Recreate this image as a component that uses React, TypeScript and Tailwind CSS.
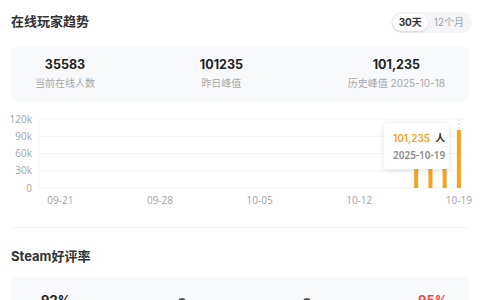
import React from "react";

const days = Array.from({ length: 30 }, (_, i) => {
  const d = new Date(2025, 8, 20 + i);
  const mm = String(d.getMonth() + 1).padStart(2, "0");
  const dd = String(d.getDate()).padStart(2, "0");
  return `${mm}-${dd}`;
});

const values: number[] = days.map((_, i) => {
  if (i === 26) return 88000;
  if (i === 27) return 92000;
  if (i === 28) return 96000;
  if (i === 29) return 101235;
  return 0;
});

const stats = [
  { value: "35583", label: "当前在线人数" },
  { value: "101235", label: "昨日峰值" },
  { value: "101,235", label: "历史峰值 2025-10-18" },
];

function TrendChart() {
  const left = 28;
  const right = 455;
  const top = 9;
  const bottom = 78;
  const step = (right - left) / 30;
  const ticks = [120, 90, 60, 30, 0];
  const labelIdx = [1, 8, 15, 22, 29];

  return (
    <div className="relative mt-2 h-[100px]">
      <svg width="458" height="100" className="block overflow-visible">
        {ticks.map((t, i) => {
          const y = top + ((bottom - top) * i) / 4;
          return (
            <g key={t}>
              <line x1={left} x2={right} y1={y} y2={y} stroke="#f1f3f5" strokeWidth="1" />
              <text
                x={21}
                y={y + 3.5}
                textAnchor="end"
                fontSize="10"
                fill="#a3a3a3"
                fontFamily="'Open Sans', 'Noto Sans', sans-serif"
              >
                {t === 0 ? "0" : `${t}k`}
              </text>
            </g>
          );
        })}
        <line x1={left} x2={left} y1={top} y2={bottom} stroke="#f1f3f5" strokeWidth="1" />
        <line
          x1={left + step * 29.5}
          x2={left + step * 29.5}
          y1={top}
          y2={bottom}
          stroke="#cfcfcf"
          strokeWidth="1"
          strokeDasharray="2 2"
        />
        {values.map((v, i) => {
          if (!v) return null;
          const h = ((bottom - top) * v) / 120000;
          const cx = left + step * (i + 0.5);
          return <rect key={i} x={cx - 2} y={bottom - h} width="4" height={h} fill="#f7a21e" />;
        })}
        {labelIdx.map((i) => (
          <text
            key={i}
            x={left + step * (i + 0.5)}
            y={93.5}
            textAnchor="middle"
            fontSize="10"
            fill="#a3a3a3"
            fontFamily="'Open Sans', 'Noto Sans', sans-serif"
          >
            {days[i]}
          </text>
        ))}
      </svg>
      <div className="absolute left-[373px] top-[13px] w-[65px] h-[46px] rounded bg-white shadow-[0_1px_6px_rgba(0,0,0,0.12)] pl-[9px] pt-[8px] whitespace-nowrap">
        <div className="flex items-center gap-[5px] text-[10px] leading-[14px] font-semibold">
          <span className="text-[#f7a21e]">101,235</span>
          <span className="text-[#333]">人</span>
        </div>
        <div className="mt-[3px] text-[10px] leading-[14px] font-semibold text-[#8c8c8c] font-['Noto_Sans',sans-serif]">
          2025-10-19
        </div>
      </div>
    </div>
  );
}

export default function App() {
  return (
    <div
      className="w-[480px] h-[300px] overflow-hidden bg-white px-[11px] pt-3"
      style={{ fontFamily: "Inter, 'Noto Sans CJK SC', sans-serif" }}
    >
      <section className="border-b border-[#f3f4f6] pb-[17px]">
        <div className="flex h-5 items-center justify-between">
          <h2 className="text-[13px] font-bold text-[#333]">在线玩家趋势</h2>
          <div className="flex h-[21px] items-center rounded-full bg-[#f4f5f7] p-[2px] mr-[-3px]">
            <span className="flex h-[17px] items-center rounded-full bg-white px-[6px] text-[10px] font-bold text-[#333] shadow-sm">
              30天
            </span>
            <span className="px-[6px] text-[10px] text-[#a3a3a3]">12个月</span>
          </div>
        </div>
        <div className="mt-[14px] flex h-[56px] items-center justify-between rounded-md bg-[#f8f9fa] px-6">
          {stats.map((s) => (
            <div key={s.label} className="flex flex-col items-center">
              <div className="text-[12.5px] font-bold leading-4 text-[#222]">{s.value}</div>
              <div className="mt-[2px] text-[10px] leading-4 text-[#a8a8a8]">{s.label}</div>
            </div>
          ))}
        </div>
        <TrendChart />
      </section>

      <h2 className="mt-[18px] h-5 text-[13px] leading-5 font-bold text-[#333]">Steam好评率</h2>
      <div className="mt-[11px] flex h-[60px] items-start justify-between rounded-md bg-[#f8f9fa] pl-[15px] pr-[6px] pt-[14px]">
        <div className="w-[60px] text-center text-[13px] font-bold text-[#222]">92%</div>
        <div className="w-[60px] flex justify-center pt-[7px]">
          <span className="h-2 w-2 rounded-sm bg-[#555]" />
        </div>
        <div className="w-[60px] flex justify-center pt-[7px]">
          <span className="h-2 w-2 rounded-sm bg-[#555]" />
        </div>
        <div className="w-[60px] text-center text-[13px] font-bold text-[#f04848]">95%</div>
      </div>
    </div>
  );
}
